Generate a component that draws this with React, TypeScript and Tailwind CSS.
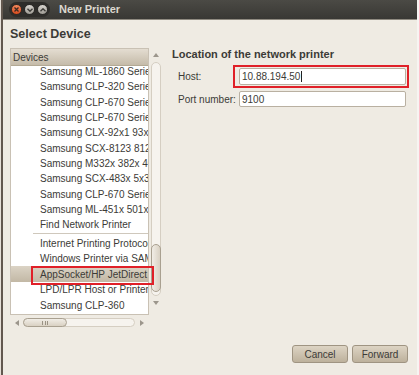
const devices = [
  "Samsung ML-1860 Series",
  "Samsung CLP-320 Series",
  "Samsung CLP-670 Series",
  "Samsung CLP-670 Series",
  "Samsung CLX-92x1 93x1 Series",
  "Samsung SCX-8123 8128 Series",
  "Samsung M332x 382x 402x Series",
  "Samsung SCX-483x 5x3x Series",
  "Samsung CLP-670 Series",
  "Samsung ML-451x 501x Series",
  "Find Network Printer",
];

const protocols = [
  "Internet Printing Protocol (ipp)",
  "Windows Printer via SAMBA",
  "AppSocket/HP JetDirect",
  "LPD/LPR Host or Printer",
  "Samsung CLP-360",
];

function Arrow({ dir }: { dir: "up" | "down" | "left" | "right" }) {
  const pts = {
    up: "0,5 3,1 6,5",
    down: "0,1 3,5 6,1",
    left: "5,0 1,3 5,6",
    right: "1,0 5,3 1,6",
  }[dir];
  return (
    <svg width="6" height="6" viewBox="0 0 6 6">
      <polygon points={pts} fill="#9c968c" />
    </svg>
  );
}

function TitleButton({ kind }: { kind: "close" | "min" | "max" }) {
  if (kind === "close") {
    return (
      <div className="w-[11px] h-[11px] rounded-full bg-gradient-to-b from-[#f5895c] to-[#d84a1b] border border-[#3a2a22] flex items-center justify-center">
        <svg width="5" height="5" viewBox="0 0 5 5">
          <path d="M0.5 0.5 L4.5 4.5 M4.5 0.5 L0.5 4.5" stroke="#3c2a22" strokeWidth="1.3" />
        </svg>
      </div>
    );
  }
  return (
    <div className="w-[11px] h-[11px] rounded-full bg-gradient-to-b from-[#d8d5cf] to-[#9e9b94] border border-[#2c2b28] flex items-center justify-center">
      <svg width="6" height="4" viewBox="0 0 6 4">
        <path
          d={kind === "min" ? "M0.5 0.8 L3 3.2 L5.5 0.8" : "M0.5 3.2 L3 0.8 L5.5 3.2"}
          stroke="#3c3b37"
          strokeWidth="1.4"
          fill="none"
        />
      </svg>
    </div>
  );
}

export default function App() {
  return (
    <div className="w-[419px] h-[375px] flex bg-[#f7f4f2] font-['Liberation_Sans',Arial,sans-serif] text-[10px] text-[#3c3b37] overflow-hidden">
      <div className="w-[1px] bg-[#e6e0d8]" />
      <div className="w-[416px] h-full flex flex-col border-l-2 border-[#62584f] bg-[#efebe3]">
        {/* title bar */}
        <div className="h-[20px] flex items-center bg-gradient-to-b from-[#4b4a45] to-[#393834] border-b border-[#8f8a80]">
          <div className="ml-[6px] h-[15px] px-[2px] rounded-full bg-[#2e2d2a] flex items-center gap-[2px]">
            <TitleButton kind="close" />
            <TitleButton kind="min" />
            <TitleButton kind="max" />
          </div>
          <span className="ml-[9px] text-[11px] font-bold text-[#dcd8ce] leading-none">New Printer</span>
        </div>

        <div className="flex-1 flex flex-col">
          <div className="pl-[7px] pt-[6px] h-[28px] text-[12.5px] font-bold leading-[16px]">Select Device</div>

          <div className="flex">
            {/* left column */}
            <div className="relative ml-[7px] w-[152px] flex flex-col">
              <div className="flex h-[269px]">
                <div className="w-[139px] h-[267px] border border-[#c9c1b4] bg-white flex flex-col overflow-hidden">
                  <div className="h-[17px] shrink-0 pl-[2px] flex items-center bg-gradient-to-b from-[#e4ddd1] to-[#c5bba9] border-b border-[#b3a994] relative z-10">
                    Devices
                  </div>
                  <div className="-mt-[2px] flex flex-col">
                    {devices.map((d, i) => (
                      <div key={i} className="h-[15.3px] pl-[29px] flex items-center whitespace-nowrap">
                        {d}
                      </div>
                    ))}
                    <div className="h-[3px] flex items-center pl-[22px]">
                      <div className="h-px w-full bg-[#cfc8bc]" />
                    </div>
                    {protocols.map((d, i) => (
                      <div
                        key={i}
                        className={
                          "h-[15.6px] pl-[29px] flex items-center whitespace-nowrap" +
                          (i === 2 ? " bg-gradient-to-b from-[#dbd3c5] to-[#c2b8a5]" : "")
                        }
                      >
                        {d}
                      </div>
                    ))}
                  </div>
                </div>
                {/* vertical scrollbar */}
                <div className="w-[13px] flex flex-col items-center">
                  <div className="h-[14px] flex items-center">
                    <Arrow dir="up" />
                  </div>
                  <div className="w-[10px] h-[234px] rounded-full border border-[#d5cec2] bg-[#f6f3ee] flex flex-col justify-end pb-[3px]">
                    <div className="h-[48px] w-[10px] -ml-px rounded-full border border-[#a9a090] bg-gradient-to-r from-[#f1ede6] to-[#d9d1c3]" />
                  </div>
                  <div className="h-[14px] flex items-center">
                    <Arrow dir="down" />
                  </div>
                </div>
              </div>
              {/* horizontal scrollbar */}
              <div className="w-[139px] h-[11px] flex items-center">
                <div className="w-[13px] flex justify-center">
                  <Arrow dir="left" />
                </div>
                <div className="w-[112px] h-[9px] rounded-full border border-[#d5cec2] bg-[#f6f3ee] flex">
                  <div className="w-[44px] h-[9px] -mt-px -ml-px rounded-full border border-[#a9a090] bg-gradient-to-b from-[#f1ede6] to-[#d9d1c3] flex items-center justify-center gap-[1.5px]">
                    <div className="w-px h-[4px] bg-[#9a9284]" />
                    <div className="w-px h-[4px] bg-[#9a9284]" />
                    <div className="w-px h-[4px] bg-[#9a9284]" />
                  </div>
                </div>
                <div className="w-[13px] flex justify-center">
                  <Arrow dir="right" />
                </div>
              </div>
              {/* highlight box */}
              <div className="absolute left-[21px] top-[218px] w-[123px] h-[19px] border-2 border-[#e02028]" />
            </div>

            {/* right column */}
            <div className="relative ml-[10px] w-[236px] flex flex-col">
              <div className="h-[13px] text-[11px] font-bold leading-[13px] whitespace-nowrap">Location of the network printer</div>
              <div className="mt-[7px] flex items-center h-[17px]">
                <span className="w-[67px] pl-[6px] whitespace-nowrap">Host:</span>
                <div className="w-[167px] h-[17px] bg-white border border-[#b9b0a1] rounded-[2px] pl-[2px] flex items-center">
                  10.88.194.50
                  <div className="w-px h-[11px] bg-[#222] ml-px" />
                </div>
              </div>
              <div className="mt-[6px] flex items-center h-[16px]">
                <span className="w-[67px] pl-[6px] whitespace-nowrap">Port number:</span>
                <div className="w-[167px] h-[16px] bg-white border border-[#b9b0a1] rounded-[2px] pl-[2px] flex items-center">
                  9100
                </div>
              </div>
              <div className="absolute left-[61px] top-[17px] w-[176px] h-[23px] border-2 border-[#e02028]" />
            </div>
          </div>

          <div className="flex-1" />
          <div className="flex justify-end gap-[4px] pr-[9px] pb-[12px]">
            <button className="w-[56px] h-[18px] rounded-[3px] border border-[#9f9482] bg-gradient-to-b from-[#ddd4c4] to-[#bdb19c] text-[10px] text-[#3c3b37]">
              Cancel
            </button>
            <button className="w-[56px] h-[18px] rounded-[3px] border border-[#9f9482] bg-gradient-to-b from-[#ddd4c4] to-[#bdb19c] text-[10px] text-[#3c3b37]">
              Forward
            </button>
          </div>
        </div>
      </div>
      <div className="w-[2px] bg-[#f7f4f2]" />
    </div>
  );
}
